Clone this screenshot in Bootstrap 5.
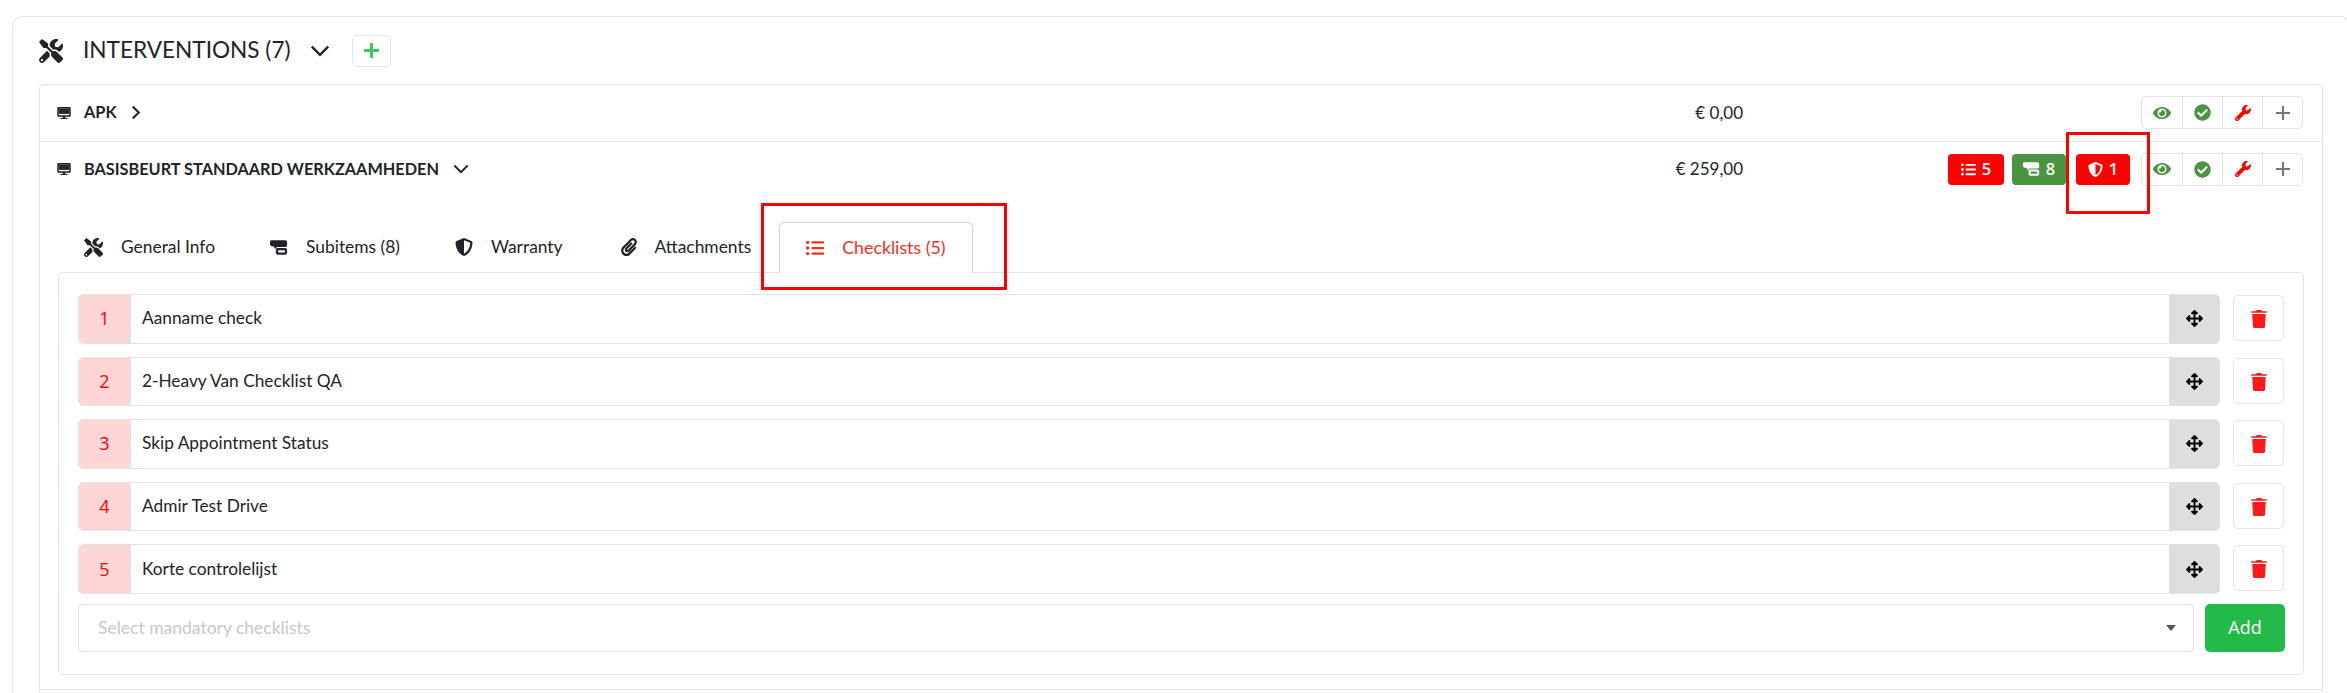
<!DOCTYPE html>
<html>
<head>
  <title>Interventions</title>
  <link rel="stylesheet" href="https://cdn.jsdelivr.net/npm/bootstrap@5.3.0/dist/css/bootstrap.min.css">
  <style>
    body { font-family: Lato, "Liberation Sans", sans-serif; color: #212529; background: #fff; height: 693px; overflow: hidden; position: relative; }
    svg { fill: currentColor; display: block; flex: none; }
    .outer-box { margin: 16px -3px 0 12px; border: 1.5px solid #e3e3e3; border-bottom: 0; border-radius: 10px 10px 0 0; padding: 10px 26px 0 26px; height: 677px; }
    .head-row { height: 47px; margin-bottom: 9.5px; }
    .head-title { font-size: 22.6px; line-height: 1; margin: 0 0 0 20px; font-weight: 400; }
    .head-chev { margin-left: 19px; }
    .add-small { width: 39px; height: 32px; border: 1.5px solid #e3e3e3; border-radius: 5px; color: #3fca62; margin-left: 22px; padding: 0; }
    .int-list { border: 1.5px solid #e3e3e3; border-bottom: 0; border-radius: 5px 5px 0 0; }
    .int-row { height: 56px; padding-left: 17px; padding-right: 19px; }
    .int-row + .int-row { border-top: 1.5px solid #e3e3e3; }
    .int-name { font-size: 16.3px; font-weight: 700; text-transform: uppercase; margin-left: 13px; margin-right: 14px; }
    .int-price { font-size: 17px; }
    .int-right { width: 560px; }
    .tag-pill { height: 31px; color: #fff; font-family: "Open Sans", sans-serif; font-size: 16.5px; font-weight: 600; border-radius: 4px; gap: 6px; justify-content: center; }
    .tag-a { width: 56px; }
    .tag-b { width: 54px; }
    .tag-last { margin-left: 2px; }
    .tag-red { background: #ff0000; }
    .tag-green { background: #4b9441; }
    .tag-gap { gap: 8px; margin-right: 11px; }
    .act-group { height: 33px; border: 1.5px solid #e3e3e3; border-radius: 5px; }
    .act-cell { width: 40px; height: 100%; }
    .act-cell + .act-cell { border-left: 1.5px solid #e3e3e3; }
    .tab-strip { padding-left: 16.5px; padding-top: 25px; height: 75px; }
    .tab-item { padding: 0 26.5px; height: 50px; gap: 18px; font-size: 17.4px; border: 1.5px solid transparent; border-bottom: 0; }
    .tab-wide { padding-right: 29.5px; }
    .tab-item.active { color: #f4301c; font-size: 17.8px; border-color: #d2d2d2; border-radius: 5px 5px 0 0; background: #fff; position: relative; z-index: 1; margin-bottom: -1.5px; height: 51.5px; }
    .tab-pane-box { margin: 0 18px 14px 18px; border: 1.5px solid #e3e3e3; border-radius: 5px; padding: 21.5px 19px 0 19px; height: 403px; }
    .next-row { border-top: 1.5px solid #e3e3e3; height: 3px; }
    .check-row { height: 50px; margin-bottom: 12.6px; }
    .check-group { border: 1.5px solid #e3e3e3; border-radius: 5px; height: 49.5px; overflow: hidden; }
    .check-num { width: 52px; background: #ffd6d6; color: #ff0000; font-family: "Open Sans", sans-serif; font-size: 18px; border-right: 1.5px solid #e3e3e3; }
    .check-text { font-size: 17.3px; padding: 0 0 1px 11px; }
    .drag-cell { width: 50px; background: #dedede; color: #000; }
    .del-btn { width: 51px; height: 46px; border: 1.5px solid #e3e3e3; border-radius: 5px; margin-left: 13px; color: #ff1a1a; margin-top: 1px; padding: 2px 0 0; }
    .pick-box { height: 48px; border: 1.5px solid #e3e3e3; border-radius: 5px; padding: 0 17px 0 19px; font-size: 17.5px; color: #c8c8c8; margin-right: 11px; margin-top: -3px; }
    .pick-caret { border-left: 5px solid transparent; border-right: 5px solid transparent; border-top: 6px solid #555; }
    .add-btn { width: 80px; height: 48px; background: #22bb4a; color: #fff; border: 0; border-radius: 5px; font-family: "Open Sans", sans-serif; font-size: 18px; font-weight: 500; margin-top: -3px; margin-right: -1px; }
    .mark-box { position: absolute; border: 3.5px solid #ff0000; border-radius: 1px; pointer-events: none; z-index: 5; }
    .mark-a { left: 761px; top: 203px; width: 246px; height: 87px; }
    .mark-b { left: 2066px; top: 132px; width: 84px; height: 82px; }
  </style>
</head>
<body>
<svg width="0" height="0" style="position:absolute">
  <symbol id="i-tools" viewBox="0 0 512 512"><path d="M501.1 395.7L384 278.6c-23.1-23.1-57.6-27.6-85.4-13.9L192 158.1V96L64 0 0 64l96 128h62.1l106.6 106.6c-13.6 27.8-9.2 62.3 13.9 85.4l117.1 117.1c14.6 14.6 38.2 14.6 52.7 0l52.7-52.7c14.5-14.6 14.5-38.2 0-52.7zM331.7 225c28.3 0 54.9 11 74.9 31l19.4 19.4c15.8-6.9 30.8-16.5 43.8-29.5 37.1-37.1 49.7-89.3 37.9-136.7-2.2-9-13.5-12.1-20.1-5.5l-74.4 74.4-67.9-11.3L334 98.9l74.4-74.4c6.6-6.6 3.4-17.9-5.7-20.2-47.4-11.7-99.6.9-136.6 37.9-28.5 28.5-41.9 66.1-41.2 103.6l82.1 82.1c8.1-1.9 16.5-2.9 24.7-2.9zm-103.9 82l-56.7-56.7L18.7 402.8c-25 25-25 65.5 0 90.5s65.5 25 90.5 0l123.6-123.6c-7.6-19.9-9.9-41.6-5-62.7zM64 472c-13.2 0-24-10.8-24-24 0-13.3 10.7-24 24-24s24 10.7 24 24c0 13.2-10.7 24-24 24z"/></symbol>
  <symbol id="i-desktop" viewBox="0 0 576 512"><path d="M528 0H48C21.5 0 0 21.5 0 48v320c0 26.5 21.5 48 48 48h192l-16 48h-72c-13.3 0-24 10.7-24 24s10.7 24 24 24h272c13.3 0 24-10.7 24-24s-10.7-24-24-24h-72l-16-48h192c26.5 0 48-21.5 48-48V48c0-26.5-21.5-48-48-48zm-16 352H64V64h448v288z"/><path d="M64 64h448v230H64z"/></symbol>
  <symbol id="i-list" viewBox="0 0 512 512"><path d="M48 48a48 48 0 1 0 48 48 48 48 0 0 0-48-48zm0 160a48 48 0 1 0 48 48 48 48 0 0 0-48-48zm0 160a48 48 0 1 0 48 48 48 48 0 0 0-48-48zm448 16H176a16 16 0 0 0-16 16v32a16 16 0 0 0 16 16h320a16 16 0 0 0 16-16v-32a16 16 0 0 0-16-16zm0-320H176a16 16 0 0 0-16 16v32a16 16 0 0 0 16 16h320a16 16 0 0 0 16-16V80a16 16 0 0 0-16-16zm0 160H176a16 16 0 0 0-16 16v32a16 16 0 0 0 16 16h320a16 16 0 0 0 16-16v-32a16 16 0 0 0-16-16z"/></symbol>
  <symbol id="i-shield" viewBox="0 0 512 512"><path d="M466.5 83.7l-192-80a48.15 48.15 0 0 0-36.9 0l-192 80C27.7 91.1 16 108.6 16 128c0 198.5 114.5 335.7 221.5 380.3 11.8 4.9 25.1 4.9 36.9 0C360.1 472.6 496 349.3 496 128c0-19.4-11.7-36.9-29.5-44.3zM256.1 446.3l-.1-381 175.9 73.3c-3.3 151.4-82.1 261.1-175.8 307.7z"/></symbol>
  <symbol id="i-clip" viewBox="0 0 448 512"><path d="M43.246 466.142c-58.43-60.289-57.341-157.511 1.386-217.581L254.392 34c44.316-45.332 116.351-45.336 160.671 0 43.89 44.894 43.943 117.329 0 162.276L232.214 383.128c-29.855 30.537-78.633 30.111-107.982-.998-28.275-29.97-27.368-77.473 1.452-106.953l143.743-146.835c6.182-6.314 16.312-6.422 22.626-.241l22.861 22.379c6.315 6.182 6.422 16.312.241 22.626L171.427 319.927c-4.932 5.045-5.236 13.428-.648 18.292 4.372 4.634 11.245 4.711 15.688.165l182.849-186.851c19.613-20.062 19.613-52.725-.011-72.798-19.189-19.627-49.957-19.637-69.154 0L90.39 293.295c-34.763 35.56-35.299 93.12-1.191 128.313 34.01 35.093 88.985 35.137 123.058.286l172.06-175.999c6.177-6.319 16.307-6.433 22.626-.256l22.877 22.364c6.319 6.177 6.434 16.307.256 22.626l-172.06 175.998c-59.576 60.938-155.943 60.216-214.77-.485z"/></symbol>
  <symbol id="i-sub" viewBox="0 0 20 16"><path d="M1.5 0H17a2 2 0 0 1 2 2v3.500a2 2 0 0 1-2 2H8a1 1 0 0 0-1 1v.5H5v-.5a2 2 0 0 0-2-2H2A2 2 0 0 1 0 4.500v-3A1.500 1.500 0 0 1 1.500 0z"/><path fill-rule="evenodd" d="M8.500 8.500H17a2 2 0 0 1 2 2V14a2 2 0 0 1-2 2H8.500a2 2 0 0 1-2-2v-3.500a2 2 0 0 1 2-2zM9 11v2.500h7.500V11z"/></symbol>
  <symbol id="i-eye" viewBox="0 0 576 512"><path d="M572.52 241.4C518.29 135.59 410.93 64 288 64S57.68 135.64 3.48 241.41a32.35 32.35 0 0 0 0 29.19C57.71 376.41 165.07 448 288 448s230.32-71.64 284.52-177.41a32.35 32.35 0 0 0 0-29.19zM288 400a144 144 0 1 1 144-144 143.93 143.93 0 0 1-144 144zm0-240a95.31 95.31 0 0 0-25.31 3.79 47.85 47.85 0 0 1-66.9 66.9A95.78 95.78 0 1 0 288 160z"/></symbol>
  <symbol id="i-check" viewBox="0 0 512 512"><path d="M504 256c0 136.967-111.033 248-248 248S8 392.967 8 256 119.033 8 256 8s248 111.033 248 248zM227.314 387.314l184-184c6.248-6.248 6.248-16.379 0-22.627l-22.627-22.627c-6.248-6.249-16.379-6.249-22.628 0L216 308.118l-70.059-70.059c-6.248-6.248-16.379-6.248-22.628 0l-22.627 22.627c-6.248 6.248-6.248 16.379 0 22.627l104 104c6.249 6.249 16.379 6.249 22.628.001z"/></symbol>
  <symbol id="i-wrench" viewBox="0 0 512 512"><path d="M507.73 109.1c-2.24-9.03-13.54-12.09-20.12-5.51l-74.36 74.36-67.88-11.31-11.31-67.88 74.36-74.36c6.62-6.62 3.43-17.9-5.66-20.16-47.38-11.74-99.55.91-136.58 37.93-39.64 39.64-50.55 97.1-34.05 147.2L18.74 402.76c-24.99 24.99-24.99 65.51 0 90.5 24.99 24.99 65.51 24.99 90.5 0l213.21-213.21c50.12 16.71 107.47 5.68 147.37-34.22 37.07-37.07 49.7-89.32 37.91-136.73zM64 472c-13.25 0-24-10.75-24-24 0-13.26 10.75-24 24-24s24 10.74 24 24c0 13.25-10.75 24-24 24z"/></symbol>
  <symbol id="i-plus" viewBox="0 0 14 14"><path d="M6 0h2v6h6v2H8v6H6V8H0V6h6z"/></symbol>
  <symbol id="i-plus-bold" viewBox="0 0 14 14"><path d="M5.600 0h2.800v5.600H14v2.800H8.400V14H5.600V8.400H0V5.600h5.600z"/></symbol>
  <symbol id="i-move" viewBox="0 0 512 512"><path d="M352.201 425.775l-79.196 79.196c-9.373 9.373-24.568 9.373-33.941 0l-79.196-79.196c-15.119-15.119-4.411-40.971 16.971-40.97h51.162L228 284H127.196v51.162c0 21.382-25.851 32.09-40.971 16.971L7.029 272.937c-9.373-9.373-9.373-24.569 0-33.941L86.225 159.8c15.119-15.119 40.971-4.411 40.971 16.971V228H228V127.196h-51.23c-21.382 0-32.09-25.851-16.971-40.971l79.196-79.196c9.373-9.373 24.568-9.373 33.941 0l79.196 79.196c15.119 15.119 4.411 40.971-16.971 40.971h-51.162V228h100.804v-51.162c0-21.382 25.851-32.09 40.97-16.971l79.196 79.196c9.373 9.373 9.373 24.569 0 33.941L425.773 352.2c-15.119 15.119-40.971 4.411-40.97-16.971V284H284v100.804h51.23c21.382 0 32.09 25.851 16.971 40.971z"/></symbol>
  <symbol id="i-trash" viewBox="0 0 448 512"><path d="M432 32H312l-9.400-18.700A24 24 0 0 0 281.100 0H166.800a23.720 23.720 0 0 0-21.400 13.300L136 32H16A16 16 0 0 0 0 48v16a16 16 0 0 0 16 16h416a16 16 0 0 0 16-16V48a16 16 0 0 0-16-16zM53.200 467a48 48 0 0 0 47.900 45h245.800a48 48 0 0 0 47.900-45L416 112H32z"/></symbol>
  <symbol id="i-down" viewBox="0 0 18 11"><path d="M1.500 1.500 9 9l7.500-7.500" fill="none" stroke="currentColor" stroke-width="2.200"/></symbol>
  <symbol id="i-right" viewBox="0 0 10 16"><path d="M1.500 1.500 8 8l-6.500 6.500" fill="none" stroke="currentColor" stroke-width="2.200"/></symbol>
</svg>

<div class="outer-box">
  <div class="head-row d-flex align-items-center">
    <svg width="24" height="24"><use href="#i-tools"/></svg>
    <h5 class="head-title">INTERVENTIONS (7)</h5>
    <svg class="head-chev" width="20" height="12"><use href="#i-down"/></svg>
    <button class="add-small d-flex align-items-center justify-content-center bg-white"><svg width="15" height="15"><use href="#i-plus-bold"/></svg></button>
  </div>

  <div class="int-list">
    <div class="int-row d-flex align-items-center">
      <svg width="14" height="12"><use href="#i-desktop"/></svg>
      <span class="int-name">APK</span>
      <svg width="10" height="15"><use href="#i-right"/></svg>
      <span class="int-price ms-auto">€ 0,00</span>
      <div class="int-right d-flex justify-content-end align-items-center">
        <div class="act-group d-flex">
          <div class="act-cell d-flex align-items-center justify-content-center"><svg width="18" height="16" color="#4b9441"><use href="#i-eye"/></svg></div>
          <div class="act-cell d-flex align-items-center justify-content-center"><svg width="17" height="17" color="#4b9441"><use href="#i-check"/></svg></div>
          <div class="act-cell d-flex align-items-center justify-content-center"><svg width="16" height="16" color="#ff0000"><use href="#i-wrench"/></svg></div>
          <div class="act-cell d-flex align-items-center justify-content-center"><svg width="14" height="14" color="#777"><use href="#i-plus"/></svg></div>
        </div>
      </div>
    </div>

    <div class="int-row d-flex align-items-center">
      <svg width="14" height="12"><use href="#i-desktop"/></svg>
      <span class="int-name">Basisbeurt standaard werkzaamheden</span>
      <svg width="16" height="10"><use href="#i-down"/></svg>
      <span class="int-price ms-auto">€ 259,00</span>
      <div class="int-right d-flex justify-content-end align-items-center">
        <div class="tag-gap d-flex">
          <div class="tag-pill tag-a tag-red d-flex align-items-center"><svg width="15" height="15"><use href="#i-list"/></svg>5</div>
          <div class="tag-pill tag-b tag-green d-flex align-items-center"><svg width="17" height="14"><use href="#i-sub"/></svg>8</div>
          <div class="tag-pill tag-b tag-last tag-red d-flex align-items-center"><svg width="15" height="15"><use href="#i-shield"/></svg>1</div>
        </div>
        <div class="act-group d-flex">
          <div class="act-cell d-flex align-items-center justify-content-center"><svg width="18" height="16" color="#4b9441"><use href="#i-eye"/></svg></div>
          <div class="act-cell d-flex align-items-center justify-content-center"><svg width="17" height="17" color="#4b9441"><use href="#i-check"/></svg></div>
          <div class="act-cell d-flex align-items-center justify-content-center"><svg width="16" height="16" color="#ff0000"><use href="#i-wrench"/></svg></div>
          <div class="act-cell d-flex align-items-center justify-content-center"><svg width="14" height="14" color="#777"><use href="#i-plus"/></svg></div>
        </div>
      </div>
    </div>

    <div class="tab-strip d-flex">
      <div class="tab-item d-flex align-items-center"><svg width="19" height="19"><use href="#i-tools"/></svg>General Info</div>
      <div class="tab-item d-flex align-items-center"><svg width="18" height="15"><use href="#i-sub"/></svg>Subitems (8)</div>
      <div class="tab-item tab-wide d-flex align-items-center"><svg width="18" height="18"><use href="#i-shield"/></svg>Warranty</div>
      <div class="tab-item d-flex align-items-center"><svg width="16" height="18"><use href="#i-clip"/></svg>Attachments</div>
      <div class="tab-item active d-flex align-items-center"><svg width="18" height="18"><use href="#i-list"/></svg>Checklists (5)</div>
    </div>

    <div class="tab-pane-box">
      <div class="check-row d-flex">
        <div class="check-group d-flex flex-grow-1">
          <div class="check-num d-flex align-items-center justify-content-center">1</div>
          <div class="check-text flex-grow-1 d-flex align-items-center">Aanname check</div>
          <div class="drag-cell d-flex align-items-center justify-content-center"><svg width="17" height="17"><use href="#i-move"/></svg></div>
        </div>
        <button class="del-btn d-flex align-items-center justify-content-center bg-white"><svg width="16" height="18"><use href="#i-trash"/></svg></button>
      </div>
      <div class="check-row d-flex">
        <div class="check-group d-flex flex-grow-1">
          <div class="check-num d-flex align-items-center justify-content-center">2</div>
          <div class="check-text flex-grow-1 d-flex align-items-center">2-Heavy Van Checklist QA</div>
          <div class="drag-cell d-flex align-items-center justify-content-center"><svg width="17" height="17"><use href="#i-move"/></svg></div>
        </div>
        <button class="del-btn d-flex align-items-center justify-content-center bg-white"><svg width="16" height="18"><use href="#i-trash"/></svg></button>
      </div>
      <div class="check-row d-flex">
        <div class="check-group d-flex flex-grow-1">
          <div class="check-num d-flex align-items-center justify-content-center">3</div>
          <div class="check-text flex-grow-1 d-flex align-items-center">Skip Appointment Status</div>
          <div class="drag-cell d-flex align-items-center justify-content-center"><svg width="17" height="17"><use href="#i-move"/></svg></div>
        </div>
        <button class="del-btn d-flex align-items-center justify-content-center bg-white"><svg width="16" height="18"><use href="#i-trash"/></svg></button>
      </div>
      <div class="check-row d-flex">
        <div class="check-group d-flex flex-grow-1">
          <div class="check-num d-flex align-items-center justify-content-center">4</div>
          <div class="check-text flex-grow-1 d-flex align-items-center">Admir Test Drive</div>
          <div class="drag-cell d-flex align-items-center justify-content-center"><svg width="17" height="17"><use href="#i-move"/></svg></div>
        </div>
        <button class="del-btn d-flex align-items-center justify-content-center bg-white"><svg width="16" height="18"><use href="#i-trash"/></svg></button>
      </div>
      <div class="check-row d-flex">
        <div class="check-group d-flex flex-grow-1">
          <div class="check-num d-flex align-items-center justify-content-center">5</div>
          <div class="check-text flex-grow-1 d-flex align-items-center">Korte controlelijst</div>
          <div class="drag-cell d-flex align-items-center justify-content-center"><svg width="17" height="17"><use href="#i-move"/></svg></div>
        </div>
        <button class="del-btn d-flex align-items-center justify-content-center bg-white"><svg width="16" height="18"><use href="#i-trash"/></svg></button>
      </div>
      <div class="d-flex">
        <div class="pick-box flex-grow-1 d-flex align-items-center justify-content-between">Select mandatory checklists<span class="pick-caret"></span></div>
        <button class="add-btn">Add</button>
      </div>
    </div>
    <div class="next-row"></div>
  </div>
</div>

<div class="mark-box mark-a"></div>
<div class="mark-box mark-b"></div>
</body>
</html>
